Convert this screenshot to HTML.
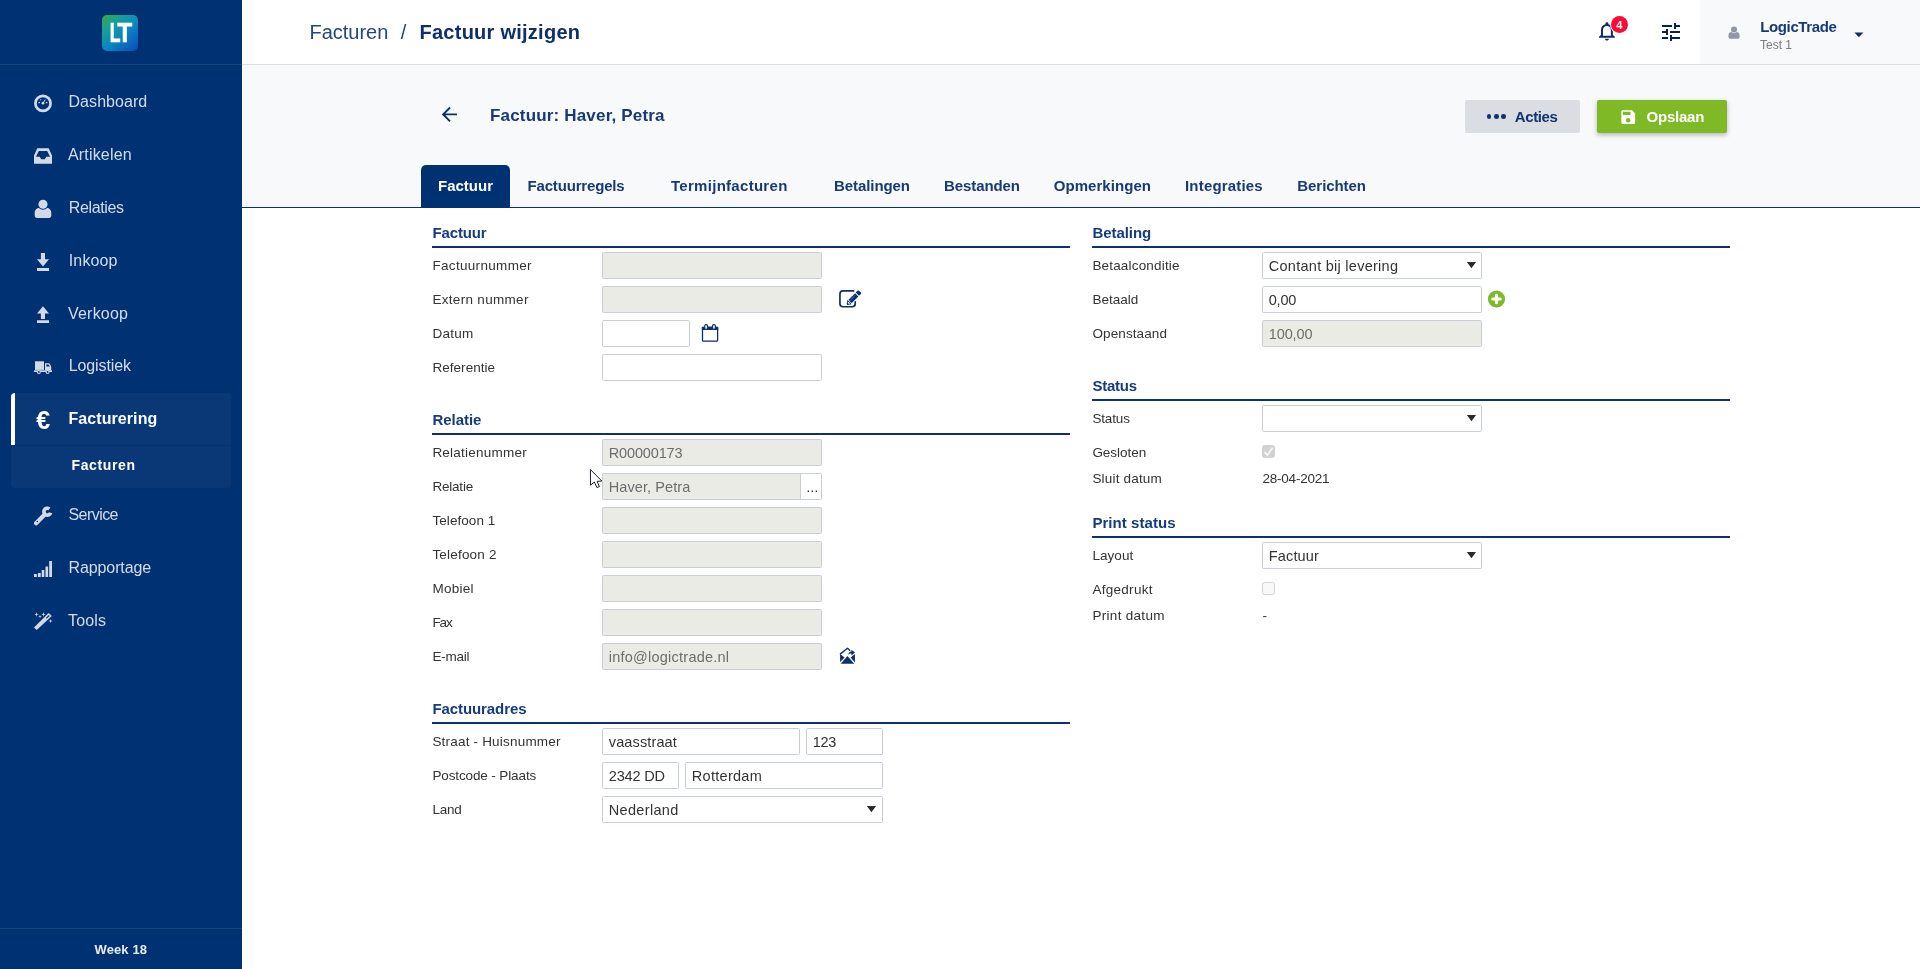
<!DOCTYPE html>
<html lang="nl">
<head>
<meta charset="utf-8">
<title>Factuur wijzigen</title>
<style>
*{box-sizing:border-box;margin:0;padding:0}
html,body{width:1920px;height:969px;overflow:hidden;background:#fff}
body{position:relative;font-family:"Liberation Sans",sans-serif;color:#333;font-size:13px}
#page{position:absolute;left:0;top:0;width:1920px;height:969px;will-change:transform}
#page>div,#page>svg{position:absolute}
.t{white-space:nowrap;line-height:20px}
#side{left:0;top:0;width:242px;height:969px;background:#003173}
.sep{left:0;width:242px;height:1px;background:#1c4580}
.nav{color:#d5dce9}
.nav.on{color:#fff;font-weight:bold}
#logo{left:102px;top:14.7px;width:36px;height:36.4px;border-radius:5px;background:linear-gradient(140deg,#3fa644 0%,#14a09a 28%,#0b86bf 55%,#0a6cc0 75%,#0a4cae 100%)}
#act{left:11px;top:393px;width:220px;height:95px;background:#0a3876;border-radius:4px;overflow:hidden}
#actbar{position:absolute;left:0;top:0;width:4px;height:52px;background:#fff}
#actsep{position:absolute;left:0;top:52px;width:220px;height:1px;background:#07316b}
#top{left:242px;top:0;width:1678px;height:64px;background:#fff}
#userbg{left:1700px;top:0;width:220px;height:64px;background:#f8f9fb}
#topline{left:242px;top:64px;width:1678px;height:1px;background:#dedede}
#badge{left:1610.8px;top:15.9px;width:17px;height:17px;border-radius:50%;background:#fb0a38;box-shadow:0 0 0 1px #fff;color:#fff;font-size:11px;font-weight:bold;line-height:18.6px;text-align:center}
#main{left:242px;top:65px;width:1678px;height:142px;background:#f8f9fb}
#tabline{left:242px;top:207px;width:1678px;height:1px;background:#0d3170}
#btn1{left:1465px;top:100px;width:115px;height:33px;background:#dadde2;border-radius:2px}
#btn2{left:1597px;top:100px;width:130px;height:33px;background:#7fb925;border-radius:2px;box-shadow:0 2px 5px rgba(0,0,0,.28)}
.dots{position:absolute;left:21.7px;top:14px;width:20px;height:5px}
.dots i{position:absolute;top:0;width:4.6px;height:4.6px;border-radius:50%;background:#12336f}
.dots i:nth-child(1){left:0}.dots i:nth-child(2){left:7.3px}.dots i:nth-child(3){left:14.6px}
#tabon{left:421px;top:165px;width:89px;height:43px;background:#003173;border-radius:5px 5px 0 0}
.tab{font-weight:bold;color:#173a75}
.sec{font-weight:bold;color:#153c7e}
.hr{height:2px;width:638px;background:#0d3170}
.lb{color:#333}
.in{height:27px;border:1px solid #c7ced9;border-radius:1.5px;background:#fff}
.in.ro{background:#ebebe6}
.it{color:#333}
.it.ro{color:#6d6d6d}
.cb{width:13px;height:13px;border:1px solid #d0d1d0;border-radius:2.5px;background:#f9f9f9}
.cb.on{background:#d1d2d1;border-color:#d1d2d1}
</style>
</head>
<body>
<div id="page">

<!-- ============ SIDEBAR ============ -->
<div id="side"></div>
<div class="sep" style="top:64px"></div>
<div class="sep" style="top:928px"></div>
<div id="logo"><svg width="36" height="36" viewBox="0 0 36 36" style="position:absolute;left:0;top:0"><text transform="translate(7.7 27.4) scale(.64 1)" font-family="Liberation Sans, sans-serif" font-weight="bold" font-size="27.5" fill="#fff" stroke="#fff" stroke-width=".7">L</text><text transform="translate(15.6 27.4) scale(.87 1)" font-family="Liberation Sans, sans-serif" font-weight="bold" font-size="27.5" fill="#fff" stroke="#fff" stroke-width=".7">T</text></svg></div>
<div id="act"><div id="actbar"></div><div id="actsep"></div></div>
<div class="t nav" style="left:68.5px;top:92.46px;font-size:16px;letter-spacing:0.059px;">Dashboard</div>
<svg style="left:28px;top:88px" width="30" height="30" viewBox="0 0 30 30" ><circle cx="15" cy="15.4" r="7.55" fill="none" stroke="#d2dae7" stroke-width="2.7"/><circle cx="11.3" cy="14.5" r=".85" fill="#d2dae7"/><circle cx="18.6" cy="14.5" r=".85" fill="#d2dae7"/><circle cx="12.7" cy="11.8" r=".7" fill="#d2dae7" opacity=".7"/><circle cx="15" cy="15.2" r="1.35" fill="#d2dae7"/><path d="M15 15.2L17.3 11.6" stroke="#d2dae7" stroke-width="1"/></svg>
<div class="t nav" style="left:68px;top:145.46px;font-size:16px;letter-spacing:0.169px;">Artikelen</div>
<svg style="left:28px;top:140px" width="30" height="30" viewBox="0 0 30 30" ><path fill-rule="evenodd" fill="#d2dae7" d="M6 23.8H24V15.5L20.7 8.3H9.3L6 15.5ZM10.8 11L8 16.8H11.7L13.2 19.2H16.8L18.3 16.8H22L19.2 11Z"/></svg>
<div class="t nav" style="left:68.75px;top:198.46px;font-size:16px;letter-spacing:-0.366px;">Relaties</div>
<svg style="left:28px;top:193px" width="30" height="30" viewBox="0 0 30 30" ><circle cx="15" cy="11.2" r="4.55" fill="#d2dae7"/><path fill="#d2dae7" d="M6.7 22.5V20C6.7 16.6 9 15 11 15C12 16 13.5 16.7 15 16.7C16.5 16.7 18 16 19 15C21 15 23.3 16.6 23.3 20V22.5C23.3 24 22.3 24.9 21 24.9H9C7.7 24.9 6.7 24 6.7 22.5Z"/></svg>
<div class="t nav" style="left:68.75px;top:251.46px;font-size:16px;letter-spacing:0.141px;">Inkoop</div>
<svg style="left:28px;top:246px" width="30" height="30" viewBox="0 0 30 30" ><path fill="#d2dae7" d="M12.9 7H17V13.2H21L15 20.6L9 13.2H12.9ZM9 22H21V24.9H9Z"/></svg>
<div class="t nav" style="left:68px;top:304.46px;font-size:16px;letter-spacing:0.214px;">Verkoop</div>
<svg style="left:28px;top:299px" width="30" height="30" viewBox="0 0 30 30" ><path fill="#d2dae7" d="M15 7.2L21 14.5H17V20H12.9V14.5H9ZM9 21.2H21V24H9Z"/></svg>
<div class="t nav" style="left:68.75px;top:356.46px;font-size:16px;letter-spacing:-0.113px;">Logistiek</div>
<svg style="left:28px;top:352px" width="30" height="30" viewBox="0 0 30 30" ><rect x="7" y="9.3" width="9" height="8.6" fill="#d2dae7"/><path fill="#d2dae7" d="M6 18.3H24V20H6Z"/><path fill-rule="evenodd" fill="#d2dae7" d="M17 11.3H20.6C21.8 11.3 23.2 14 23.2 15.4V18.5H17ZM18.3 12.4V14.6H21.8C21.5 13.6 20.9 12.4 20.2 12.4Z"/><circle cx="10.9" cy="20" r="1.45" fill="#003173" stroke="#d2dae7" stroke-width="1.1"/><circle cx="19.6" cy="20" r="1.45" fill="#003173" stroke="#d2dae7" stroke-width="1.1"/></svg>
<div class="t nav on" style="left:68.5px;top:409.46px;font-size:16px;letter-spacing:0.073px;">Facturering</div>
<div class="t" style="left:36.2px;top:407.8px;font-size:25px;line-height:25px;font-weight:bold;color:#fff">€</div>
<div class="t nav" style="left:68.5px;top:505.46px;font-size:16px;letter-spacing:-0.560px;">Service</div>
<svg style="left:28px;top:501px" width="30" height="30" viewBox="0 0 30 30" ><path d="M8.1 22.2L16.2 13.9" stroke="#d2dae7" stroke-width="4.3" stroke-linecap="round"/><path d="M21.4 7.85A3.45 3.45 0 1 0 22.65 11.75" fill="none" stroke="#d2dae7" stroke-width="3.6"/><circle cx="9.3" cy="20.6" r=".75" fill="#003173"/></svg>
<div class="t nav" style="left:68.5px;top:558.46px;font-size:16px;letter-spacing:-0.103px;">Rapportage</div>
<svg style="left:28px;top:554px" width="30" height="30" viewBox="0 0 30 30" ><path fill="#d2dae7" d="M6 20.1H8.8V22.9H6ZM9.9 18.9H12.7V22.9H9.9ZM13.7 16.1H16.3V22.9H13.7ZM17.5 12.4H20.1V22.9H17.5ZM21.2 7.1H24V22.9H21.2Z"/></svg>
<div class="t nav" style="left:68px;top:611.46px;font-size:16px;letter-spacing:0.160px;">Tools</div>
<svg style="left:28px;top:606px" width="30" height="30" viewBox="0 0 30 30" ><path fill="#d2dae7" d="M6 21.4L20.6 7.1L23.8 9.9L8.7 24Z"/><path d="M18.6 11.9L21 9.8" stroke="#003173" stroke-width="1.2" stroke-linecap="round"/><path fill="#d2dae7" d="M8.5 6.1000000000000005L9.006 7.894L10.8 8.4L9.006 8.906L8.5 10.7L7.994 8.906L6.2 8.4L7.994 7.894ZM12 8.6L12.44 10.16L14.0 10.6L12.44 11.04L12 12.6L11.56 11.04L10.0 10.6L11.56 10.16ZM15.5 6.1000000000000005L16.006 7.894L17.8 8.4L16.006 8.906L15.5 10.7L14.994 8.906L13.2 8.4L14.994 7.894ZM22.6 12.9L23.062 14.538L24.700000000000003 15L23.062 15.462L22.6 17.1L22.138 15.462L20.5 15L22.138 14.538Z"/></svg>
<div class="t nav on" style="left:71.5px;top:455.15px;font-size:14px;letter-spacing:0.625px;">Facturen</div>
<div class="t" style="left:94.5px;top:939.90px;font-size:13px;letter-spacing:0.117px;color:#e8ecf3;font-weight:bold;">Week 18</div>

<!-- ============ TOP BAR ============ -->
<div id="top"></div>
<div id="userbg"></div>
<div id="topline"></div>
<div class="t" style="left:309.5px;top:21.77px;font-size:20px;letter-spacing:-0.020px;color:#24467f;">Facturen</div>
<div class="t" style="left:400.8px;top:21.77px;font-size:20px;letter-spacing:1.137px;color:#24467f;">/</div>
<div class="t" style="left:419.5px;top:21.77px;font-size:20px;letter-spacing:0.254px;color:#0d2f6e;font-weight:bold;">Factuur wijzigen</div>
<svg style="left:1594.9px;top:20.45px" width="23.85" height="22.4" viewBox="0 0 24 24" preserveAspectRatio="none"><path fill="#0a2d6b" d="M12 22c1.1 0 2-.9 2-2h-4c0 1.1.9 2 2 2zm6-6v-5c0-3.07-1.63-5.64-4.5-6.32V4c0-.83-.67-1.5-1.5-1.5s-1.5.67-1.5 1.5v.68C7.64 5.36 6 7.92 6 11v5l-2 2v1h16v-1l-2-2zm-2 1H8v-6c0-2.48 1.51-4.5 4-4.5s4 2.02 4 4.5v6z"/></svg>
<div id="badge">4</div>
<svg style="left:1659px;top:20px" width="24" height="24" viewBox="0 0 24 24" ><path fill="#04205f" d="M3 17v2h6v-2H3zM3 5v2h10V5H3zm10 16v-2h8v-2h-8v-2h-2v6h2zM7 9v2H3v2h4v2h2V9H7zm14 4v-2H11v2h10zm-6-4h2V7h4V5h-4V3h-2v6z"/></svg>
<svg style="left:1723.9px;top:21.6px" width="20.1" height="20.1" viewBox="0 0 30 30" ><circle cx="15" cy="11.2" r="4.55" fill="#9197a3"/><path fill="#9197a3" d="M6.7 22.5V20C6.7 16.6 9 15 11 15C12 16 13.5 16.7 15 16.7C16.5 16.7 18 16 19 15C21 15 23.3 16.6 23.3 20V22.5C23.3 24 22.3 24.9 21 24.9H9C7.7 24.9 6.7 24 6.7 22.5Z"/></svg>
<svg style="left:1854px;top:31.5px" width="10" height="6" viewBox="0 0 10 6" ><path fill="#0d2f6e" d="M.4.4H9.3L4.85 5.3Z"/></svg>
<div class="t" style="left:1760.3px;top:16.80px;font-size:15px;letter-spacing:-0.392px;color:#173a75;font-weight:bold;">LogicTrade</div>
<div class="t" style="left:1760px;top:34.54px;font-size:12px;color:#7b7b7b;">Test 1</div>

<!-- ============ MAIN ============ -->
<div id="main"></div>
<div id="tabline"></div>
<svg style="left:438px;top:103px" width="22.8" height="22.8" viewBox="0 0 24 24" ><path fill="#0d2f6e" d="M20 11H7.83l5.59-5.59L12 4l-8 8 8 8 1.41-1.41L7.83 13H20v-2z"/></svg>
<div class="t" style="left:490px;top:105.91px;font-size:17px;letter-spacing:0.174px;color:#173a75;font-weight:bold;">Factuur: Haver, Petra</div>
<div id="btn1"><span class="dots"><i></i><i></i><i></i></span></div>
<div class="t" style="left:1514.8px;top:106.80px;font-size:15px;letter-spacing:-0.406px;color:#12336f;font-weight:bold;">Acties</div>
<div id="btn2"></div>
<svg style="left:1618.7px;top:107.6px" width="18.4" height="18.4" viewBox="0 0 24 24" ><path fill="#fff" d="M17 3H5c-1.11 0-2 .9-2 2v14c0 1.1.89 2 2 2h14c1.1 0 2-.9 2-2V7l-4-4zm-5 16c-1.66 0-3-1.34-3-3s1.34-3 3-3 3 1.34 3 3-1.34 3-3 3zm3-10H5V5h10v4z"/></svg>
<div class="t" style="left:1646.6px;top:106.80px;font-size:15px;letter-spacing:-0.231px;color:#fff;font-weight:bold;">Opslaan</div>
<div id="tabon"></div>
<div class="t tab" style="left:438px;top:175.60px;font-size:15px;color:#fff;">Factuur</div>
<div class="t tab" style="left:527.5px;top:175.60px;font-size:15px;letter-spacing:-0.167px;">Factuurregels</div>
<div class="t tab" style="left:671px;top:175.60px;font-size:15px;letter-spacing:0.289px;">Termijnfacturen</div>
<div class="t tab" style="left:834px;top:175.60px;font-size:15px;letter-spacing:-0.076px;">Betalingen</div>
<div class="t tab" style="left:944px;top:175.60px;font-size:15px;letter-spacing:-0.086px;">Bestanden</div>
<div class="t tab" style="left:1053.7px;top:175.60px;font-size:15px;letter-spacing:0.061px;">Opmerkingen</div>
<div class="t tab" style="left:1185px;top:175.60px;font-size:15px;letter-spacing:0.184px;">Integraties</div>
<div class="t tab" style="left:1297.3px;top:175.60px;font-size:15px;letter-spacing:-0.061px;">Berichten</div>

<!-- ============ FORM LEFT ============ -->
<div class="t sec" style="left:432.4px;top:222.80px;font-size:15px;letter-spacing:-0.119px;">Factuur</div>
<div class="hr" style="left:432px;top:246px"></div>
<div class="t lb" style="left:432.4px;top:255.92px;font-size:13.5px;letter-spacing:0.327px;">Factuurnummer</div>
<div class="in ro" style="left:602px;top:252px;width:220px"></div>
<div class="t lb" style="left:432.4px;top:289.92px;font-size:13.5px;letter-spacing:0.310px;">Extern nummer</div>
<div class="in ro" style="left:602px;top:286px;width:220px"></div>
<svg style="left:830px;top:283px" width="40" height="32" viewBox="0 0 40 32" ><path fill="none" stroke="#0d2f6e" stroke-width="1.7" stroke-linecap="round" d="M23.6 7.95H12.9A3 3 0 0 0 9.95 10.9V20.8A3 3 0 0 0 12.9 23.75H22.3A3 3 0 0 0 25.25 20.8V18.9"/><path fill="#0d2f6e" d="M21.59 20.24L18.33 17L25.1 10.18L28.36 13.42ZM29 12.78L25.73 9.54L27.4 7.7C27.8 7.3 28.5 7.3 28.9 7.7L30.9 9.6C31.3 10 31.3 10.7 30.9 11.1Z"/><path fill="#fff" stroke="#0d2f6e" stroke-width=".9" stroke-linejoin="round" d="M17.2 21.4L17.6 17.6L21 21Z"/><path fill="#0d2f6e" d="M16.9 21.7L17.15 19.6L19 21.5Z"/><path d="M19.9 17.6L25.4 12.1" stroke="#fff" stroke-width=".7" stroke-dasharray="1 1" opacity=".8"/></svg>
<div class="t lb" style="left:432.4px;top:323.92px;font-size:13.5px;letter-spacing:0.259px;">Datum</div>
<div class="in" style="left:602px;top:320px;width:88px"></div>
<svg style="left:690px;top:317px" width="40" height="32" viewBox="0 0 40 32" ><rect x="12.5" y="10.3" width="15.1" height="13.9" rx="1" fill="#fff" stroke="#0d2f6e" stroke-width="1.3"/><rect x="11.9" y="9.7" width="16.3" height="3.3" rx=".6" fill="#0d2f6e"/><rect x="14.7" y="7.6" width="2.9" height="4.6" rx="1.3" fill="#e8ecf3" stroke="#0d2f6e" stroke-width="1.1"/><rect x="22.5" y="7.6" width="2.9" height="4.6" rx="1.3" fill="#e8ecf3" stroke="#0d2f6e" stroke-width="1.1"/></svg>
<div class="t lb" style="left:432.4px;top:357.92px;font-size:13.5px;letter-spacing:0.045px;">Referentie</div>
<div class="in" style="left:602px;top:354px;width:220px"></div>
<div class="t sec" style="left:432.4px;top:409.80px;font-size:15px;letter-spacing:-0.034px;">Relatie</div>
<div class="hr" style="left:432px;top:433px"></div>
<div class="t lb" style="left:432.4px;top:442.92px;font-size:13.5px;letter-spacing:0.229px;">Relatienummer</div>
<div class="in ro" style="left:602px;top:439px;width:220px"></div>
<div class="t it ro" style="left:608.8px;top:442.98px;font-size:14.5px;letter-spacing:-0.150px;">R00000173</div>
<div class="t lb" style="left:432.4px;top:476.92px;font-size:13.5px;letter-spacing:-0.205px;">Relatie</div>
<div class="in" style="left:602px;top:473px;width:220px"></div>
<div class="in ro" id="relin" style="left:602px;top:473px;width:199px"></div>
<div class="t it ro" style="left:608.8px;top:476.98px;font-size:14.5px;letter-spacing:0.073px;">Haver, Petra</div>
<div class="t" style="left:806.6px;top:477.50px;font-size:13px;letter-spacing:0.378px;color:#222;">...</div>
<div class="t lb" style="left:432.4px;top:510.92px;font-size:13.5px;letter-spacing:0.076px;">Telefoon 1</div>
<div class="in ro" style="left:602px;top:507px;width:220px"></div>
<div class="t lb" style="left:432.4px;top:544.92px;font-size:13.5px;letter-spacing:0.199px;">Telefoon 2</div>
<div class="in ro" style="left:602px;top:541px;width:220px"></div>
<div class="t lb" style="left:432.4px;top:578.92px;font-size:13.5px;letter-spacing:0.264px;">Mobiel</div>
<div class="in ro" style="left:602px;top:575px;width:220px"></div>
<div class="t lb" style="left:432.4px;top:612.92px;font-size:13.5px;letter-spacing:-1.058px;">Fax</div>
<div class="in ro" style="left:602px;top:609px;width:220px"></div>
<div class="t lb" style="left:432.4px;top:646.92px;font-size:13.5px;letter-spacing:-0.213px;">E-mail</div>
<div class="in ro" style="left:602px;top:643px;width:220px"></div>
<div class="t it ro" style="left:608.8px;top:646.98px;font-size:14.5px;letter-spacing:0.235px;">info@logictrade.nl</div>
<svg style="left:827px;top:640px" width="40" height="32" viewBox="0 0 40 32" ><path fill="none" stroke="#0d2f6e" stroke-width="1.4" stroke-linejoin="round" stroke-linecap="round" d="M13.4 13.9L20.5 8.3L22.7 10.3"/><path fill="#0d2f6e" d="M13.1 14.1L17.6 17.5L13.1 22ZM13.7 23.8L20.5 16L27.2 23.8ZM27.9 14L23.7 17.6L27.9 22.4Z"/><path fill="#0d2f6e" d="M24.4 9.7L28 12.5L24.4 15.6V13.6C23 13.5 22 14 21 15C21.3 13 22.6 11.7 24.4 11.5Z"/></svg>
<div class="t sec" style="left:432.4px;top:698.80px;font-size:15px;letter-spacing:-0.086px;">Factuuradres</div>
<div class="hr" style="left:432px;top:722px"></div>
<div class="t lb" style="left:432.4px;top:731.92px;font-size:13.5px;letter-spacing:0.197px;">Straat - Huisnummer</div>
<div class="in" style="left:602px;top:728px;width:198px"></div>
<div class="t it" style="left:608.8px;top:731.98px;font-size:14.5px;letter-spacing:0.122px;">vaasstraat</div>
<div class="in" style="left:806px;top:728px;width:77px"></div>
<div class="t it" style="left:812.8px;top:731.98px;font-size:14.5px;letter-spacing:-0.352px;">123</div>
<div class="t lb" style="left:432.4px;top:765.92px;font-size:13.5px;letter-spacing:-0.120px;">Postcode - Plaats</div>
<div class="in" style="left:602px;top:762px;width:77px"></div>
<div class="t it" style="left:608.8px;top:765.98px;font-size:14.5px;letter-spacing:-0.172px;">2342 DD</div>
<div class="in" style="left:685px;top:762px;width:198px"></div>
<div class="t it" style="left:691.8px;top:765.98px;font-size:14.5px;letter-spacing:0.287px;">Rotterdam</div>
<div class="t lb" style="left:432.4px;top:799.92px;font-size:13.5px;letter-spacing:-0.216px;">Land</div>
<div class="in" style="left:602px;top:796px;width:281px"></div>
<div class="t it" style="left:608.8px;top:799.98px;font-size:14.5px;letter-spacing:0.322px;">Nederland</div>
<svg class="arr" style="left:864px;top:804px" width="14" height="12" viewBox="0 0 14 12"><path d="M2.85 2.1H12.05L7.45 8.3Z" fill="#2a2a2a"/></svg>

<!-- ============ FORM RIGHT ============ -->
<div class="t sec" style="left:1092.4px;top:222.80px;font-size:15px;letter-spacing:-0.041px;">Betaling</div>
<div class="hr" style="left:1092px;top:246px"></div>
<div class="t lb" style="left:1092.4px;top:255.92px;font-size:13.5px;letter-spacing:0.176px;">Betaalconditie</div>
<div class="in" style="left:1262px;top:252px;width:220px"></div>
<div class="t it" style="left:1268.8px;top:255.98px;font-size:14.5px;letter-spacing:0.266px;">Contant bij levering</div>
<svg class="arr" style="left:1464px;top:260px" width="14" height="12" viewBox="0 0 14 12"><path d="M2.85 2.1H12.05L7.45 8.3Z" fill="#2a2a2a"/></svg>
<div class="t lb" style="left:1092.4px;top:289.92px;font-size:13.5px;letter-spacing:0.017px;">Betaald</div>
<div class="in" style="left:1262px;top:286px;width:220px"></div>
<div class="t it" style="left:1268.8px;top:289.98px;font-size:14.5px;letter-spacing:-0.245px;">0,00</div>
<svg style="left:1480px;top:284px" width="40" height="32" viewBox="0 0 40 32" ><circle cx="16.5" cy="15" r="8.6" fill="#7db928"/><path d="M16.5 11.2V18.8M12.7 15H20.3" stroke="#fff" stroke-width="3.1" stroke-linecap="round"/></svg>
<div class="t lb" style="left:1092.4px;top:323.92px;font-size:13.5px;letter-spacing:0.115px;">Openstaand</div>
<div class="in ro" style="left:1262px;top:320px;width:220px"></div>
<div class="t it ro" style="left:1268.8px;top:323.98px;font-size:14.5px;letter-spacing:-0.132px;">100,00</div>
<div class="t sec" style="left:1092.4px;top:375.80px;font-size:15px;letter-spacing:-0.249px;">Status</div>
<div class="hr" style="left:1092px;top:399px"></div>
<div class="t lb" style="left:1092.4px;top:408.92px;font-size:13.5px;letter-spacing:-0.136px;">Status</div>
<div class="in" style="left:1262px;top:405px;width:220px"></div>
<svg class="arr" style="left:1464px;top:413px" width="14" height="12" viewBox="0 0 14 12"><path d="M2.85 2.1H12.05L7.45 8.3Z" fill="#2a2a2a"/></svg>
<div class="t lb" style="left:1092.4px;top:442.92px;font-size:13.5px;letter-spacing:-0.021px;">Gesloten</div>
<div class="cb on" style="left:1262px;top:445px"><svg width="11" height="11" viewBox="0 0 11 11" style="position:absolute;left:0;top:0"><path d="M1.5 6L4.4 9L9.5 1.9" fill="none" stroke="#f4f4f4" stroke-width="1.9"/></svg></div>
<div class="t lb" style="left:1092.4px;top:468.92px;font-size:13.5px;letter-spacing:0.185px;">Sluit datum</div>
<div class="t lb" style="left:1262.5px;top:468.92px;font-size:13.5px;letter-spacing:-0.229px;">28-04-2021</div>
<div class="t sec" style="left:1092.4px;top:512.80px;font-size:15px;letter-spacing:0.053px;">Print status</div>
<div class="hr" style="left:1092px;top:536px"></div>
<div class="t lb" style="left:1092.4px;top:545.92px;font-size:13.5px;letter-spacing:0.071px;">Layout</div>
<div class="in" style="left:1262px;top:542px;width:220px"></div>
<div class="t it" style="left:1268.8px;top:545.98px;font-size:14.5px;letter-spacing:0.138px;">Factuur</div>
<svg class="arr" style="left:1464px;top:550px" width="14" height="12" viewBox="0 0 14 12"><path d="M2.85 2.1H12.05L7.45 8.3Z" fill="#2a2a2a"/></svg>
<div class="t lb" style="left:1092.4px;top:579.92px;font-size:13.5px;letter-spacing:0.288px;">Afgedrukt</div>
<div class="cb" style="left:1262px;top:582px"></div>
<div class="t lb" style="left:1092.4px;top:605.92px;font-size:13.5px;letter-spacing:0.307px;">Print datum</div>
<div class="t lb" style="left:1262.5px;top:605.92px;font-size:13.5px;letter-spacing:-0.700px;">-</div>
<svg style="left:585px;top:465px" width="22" height="26" viewBox="0 0 22 26" ><path d="M5.4 4.5L5.5 20.2L9.3 17L11.9 22.5L14.4 21.6L12.1 16.4L16.8 16Z" fill="#fff" stroke="#10131c" stroke-width=".95" stroke-linejoin="round"/></svg>
</div>
</body>
</html>
